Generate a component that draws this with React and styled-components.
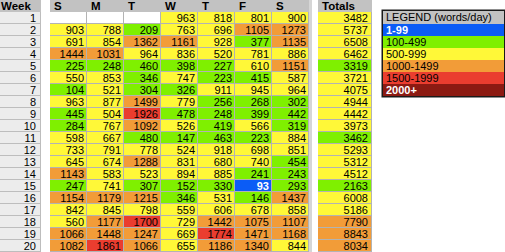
import React from "react";
import styled, { createGlobalStyle } from "styled-components";

const GlobalStyle = createGlobalStyle`
  body {
    margin: 0;
    background: #ffffff;
    font-family: "Liberation Sans", Arial, sans-serif;
  }
`;

const COLORS = {
  none: "#ffffff",
  blue: "#0b5cf6",
  green: "#7ff000",
  yellow: "#fff838",
  orange: "#f29c38",
  red: "#ea3d2f",
  darkred: "#8c1a12",
};

const levelOf = (v) => {
  if (v == null) return "none";
  if (v < 100) return "blue";
  if (v < 500) return "green";
  if (v < 1000) return "yellow";
  if (v < 1500) return "orange";
  if (v < 2000) return "red";
  return "darkred";
};

const weeks = [
  [null, null, null, 963, 818, 801, 900],
  [903, 788, 209, 763, 696, 1105, 1273],
  [691, 854, 1362, 1161, 928, 377, 1135],
  [1444, 1031, 964, 836, 520, 781, 886],
  [225, 248, 460, 398, 227, 610, 1151],
  [550, 853, 346, 747, 223, 415, 587],
  [104, 521, 304, 326, 911, 945, 964],
  [963, 877, 1499, 779, 256, 268, 302],
  [445, 504, 1926, 478, 248, 399, 442],
  [284, 767, 1092, 526, 419, 566, 319],
  [598, 667, 480, 147, 463, 223, 884],
  [733, 791, 778, 524, 918, 698, 851],
  [645, 674, 1288, 831, 680, 740, 454],
  [1143, 583, 523, 894, 885, 241, 243],
  [247, 741, 307, 152, 330, 93, 293],
  [1154, 1179, 1215, 346, 531, 146, 1437],
  [842, 845, 798, 559, 606, 678, 858],
  [560, 1177, 1700, 729, 1442, 1075, 1107],
  [1066, 1448, 1247, 669, 1774, 1471, 1168],
  [1082, 1861, 1066, 655, 1186, 1340, 844],
];

const days = ["S", "M", "T", "W", "T", "F", "S"];

const legend = [
  { label: "1-99", level: "blue", light: true },
  { label: "100-499", level: "green" },
  { label: "500-999", level: "yellow" },
  { label: "1000-1499", level: "orange" },
  { label: "1500-1999", level: "red" },
  { label: "2000+", level: "darkred", light: true },
];

const Page = styled.div`
  display: flex;
  align-items: flex-start;
  width: 505px;
  height: 252px;
  overflow: hidden;
`;

const Sheet = styled.div`
  display: grid;
  grid-template-columns: 41px 9px repeat(7, 37px) 9px 54px;
  grid-auto-rows: 12px;
  font-size: 11px;
  color: #000;
`;

const HeadCell = styled.div`
  background: #c2c2c2;
  font-weight: bold;
  font-size: 11.5px;
  line-height: 12px;
  padding-left: ${(p) => (p.$week ? "1px" : "4px")};
  white-space: nowrap;
`;

const Gap = styled.div`
  background: #ffffff;
  box-shadow: ${(p) => (p.$stripe ? "inset 3px 0 0 #d6d6d6" : "none")};
`;

const WeekCell = styled.div`
  background: #ececec;
  box-shadow: inset -1px -1px 0 #bdbdbd;
  text-align: right;
  padding-right: 5px;
  line-height: 12px;
`;

const Cell = styled.div`
  background: ${(p) => COLORS[p.$level]};
  box-shadow: inset -1px -1px 0 #b3b3b3;
  text-align: right;
  padding-right: ${(p) => (p.$total ? "4px" : "3px")};
  line-height: 12px;
  color: ${(p) => (p.$light ? "#ffffff" : "#000000")};
  font-weight: ${(p) => (p.$light ? "bold" : "normal")};
`;

const Legend = styled.div`
  margin: 10px 0 0 10px;
  width: 121px;
  border: 1px solid #1a1a1a;
  box-shadow: 0 0 0 0.5px #1a1a1a;
  font-size: 11px;
`;

const LegendRow = styled.div`
  height: 12px;
  line-height: 12px;
  padding-left: 3px;
  background: ${(p) => (p.$head ? "#c2c2c2" : COLORS[p.$level])};
  color: ${(p) => (p.$light ? "#ffffff" : "#000000")};
  font-weight: ${(p) => (p.$light ? "bold" : "normal")};
  ${(p) => p.$head && "height: 13px; line-height: 13px;"}
`;

const App = () => {
  return (
    <>
      <GlobalStyle />
      <Page>
        <Sheet>
          <HeadCell $week>Week</HeadCell>
          <Gap />
          {days.map((d, i) => (
            <HeadCell key={i}>{d}</HeadCell>
          ))}
          <Gap $stripe />
          <HeadCell>Totals</HeadCell>

          {weeks.map((row, w) => {
            const filled = row.filter((v) => v != null);
            const total = filled.reduce((a, b) => a + b, 0);
            const avg = total / filled.length;
            return (
              <React.Fragment key={w}>
                <WeekCell>{w + 1}</WeekCell>
                <Gap />
                {row.map((v, d) => (
                  <Cell key={d} $level={levelOf(v)} $light={v != null && v < 100}>
                    {v ?? ""}
                  </Cell>
                ))}
                <Gap $stripe />
                <Cell $total $level={levelOf(avg)}>
                  {total}
                </Cell>
              </React.Fragment>
            );
          })}
        </Sheet>

        <Legend>
          <LegendRow $head>LEGEND (words/day)</LegendRow>
          {legend.map((l) => (
            <LegendRow key={l.label} $level={l.level} $light={l.light}>
              {l.label}
            </LegendRow>
          ))}
        </Legend>
      </Page>
    </>
  );
};

export default App;
